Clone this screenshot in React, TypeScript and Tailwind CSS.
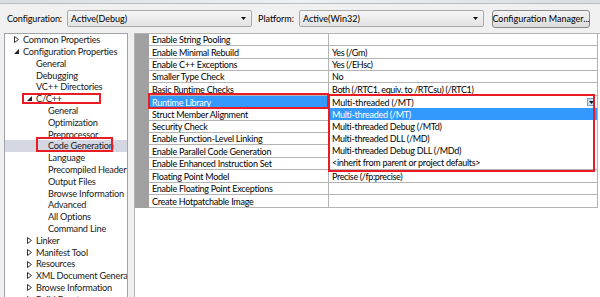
import React from 'react';

const FONT = { fontFamily: 'Lato, "Noto Sans", sans-serif' };

type TreeItem = { label: string; level: 0 | 1 | 2; arrow?: 'open' | 'closed'; selected?: boolean; box?: 'cc' | 'cg' };

const tree: TreeItem[] = [
  { label: 'Common Properties', level: 0, arrow: 'closed' },
  { label: 'Configuration Properties', level: 0, arrow: 'open' },
  { label: 'General', level: 1 },
  { label: 'Debugging', level: 1 },
  { label: 'VC++ Directories', level: 1 },
  { label: 'C/C++', level: 1, arrow: 'open', box: 'cc' },
  { label: 'General', level: 2 },
  { label: 'Optimization', level: 2 },
  { label: 'Preprocessor', level: 2 },
  { label: 'Code Generation', level: 2, selected: true, box: 'cg' },
  { label: 'Language', level: 2 },
  { label: 'Precompiled Headers', level: 2 },
  { label: 'Output Files', level: 2 },
  { label: 'Browse Information', level: 2 },
  { label: 'Advanced', level: 2 },
  { label: 'All Options', level: 2 },
  { label: 'Command Line', level: 2 },
  { label: 'Linker', level: 1, arrow: 'closed' },
  { label: 'Manifest Tool', level: 1, arrow: 'closed' },
  { label: 'Resources', level: 1, arrow: 'closed' },
  { label: 'XML Document Generator', level: 1, arrow: 'closed' },
  { label: 'Browse Information', level: 1, arrow: 'closed' },
  { label: 'Build Events', level: 1, arrow: 'closed' },
];

const levelPad: Record<number, string> = { 0: 'pl-[9px]', 1: 'pl-[22px]', 2: 'pl-[34px]' };

type Row = { name: string; value?: string; h: string; runtime?: boolean };

const rows: Row[] = [
  { name: 'Enable String Pooling', h: 'h-[12px]' },
  { name: 'Enable Minimal Rebuild', value: 'Yes (/Gm)', h: 'h-[13px]' },
  { name: 'Enable C++ Exceptions', value: 'Yes (/EHsc)', h: 'h-[12px]' },
  { name: 'Smaller Type Check', value: 'No', h: 'h-[12px]' },
  { name: 'Basic Runtime Checks', value: 'Both (/RTC1, equiv. to /RTCsu) (/RTC1)', h: 'h-[13px]' },
  { name: 'Runtime Library', h: 'h-[13px]', runtime: true },
  { name: 'Struct Member Alignment', h: 'h-[12px]' },
  { name: 'Security Check', h: 'h-[12px]' },
  { name: 'Enable Function-Level Linking', h: 'h-[12px]' },
  { name: 'Enable Parallel Code Generation', h: 'h-[13px]' },
  { name: 'Enable Enhanced Instruction Set', h: 'h-[12px]' },
  { name: 'Floating Point Model', value: 'Precise (/fp:precise)', h: 'h-[13px]' },
  { name: 'Enable Floating Point Exceptions', h: 'h-[12px]' },
  { name: 'Create Hotpatchable Image', h: 'h-[13px]' },
];

const options = [
  'Multi-threaded (/MT)',
  'Multi-threaded Debug (/MTd)',
  'Multi-threaded DLL (/MD)',
  'Multi-threaded Debug DLL (/MDd)',
  '<inherit from parent or project defaults>',
];

function Arrow({ kind }: { kind?: 'open' | 'closed' }) {
  if (kind === 'closed') {
    return (
      <svg width="5" height="7" viewBox="0 0 5 7" className="block">
        <path d="M0.5 0.5 L4.5 3.5 L0.5 6.5 Z" fill="none" stroke="#333" strokeWidth="1" />
      </svg>
    );
  }
  if (kind === 'open') {
    return (
      <svg width="5" height="5" viewBox="0 0 5 5" className="block">
        <path d="M5 0 L5 5 L0 5 Z" fill="#222" />
      </svg>
    );
  }
  return null;
}

function DownTri() {
  return (
    <svg width="5" height="3" viewBox="0 0 5 3" className="block">
      <path d="M0 0 L5 0 L2.5 3 Z" fill="#111" />
    </svg>
  );
}

function Combo({ text, w }: { text: string; w: string }) {
  return (
    <div className={`${w} h-[17px] rounded-[2px] border border-[#a9a9a9] bg-gradient-to-b from-[#f6f6f6] to-[#e3e3e3] flex items-center pl-[3px] pr-[5px]`}>
      <span className="flex-1 text-[9px] text-black leading-none whitespace-nowrap">{text}</span>
      <DownTri />
    </div>
  );
}

export default function App() {
  return (
    <div className="w-[600px] h-[297px] bg-[#f0f0f0] overflow-hidden flex flex-col text-black" style={FONT}>
      <div className="h-[4px] shrink-0 bg-gradient-to-r from-[#d8dce3] via-[#eef0f3] to-[#d8dce3] border-b border-[#b8bcc4]" />
      <div className="h-[29px] shrink-0 flex items-center pl-[7px]">
        <span className="text-[9px] tracking-[-0.1px] w-[60px] leading-none whitespace-nowrap">Configuration:</span>
        <Combo text="Active(Debug)" w="w-[185px]" />
        <span className="text-[9px] ml-[6px] w-[41px] leading-none whitespace-nowrap">Platform:</span>
        <Combo text="Active(Win32)" w="w-[185px]" />
        <div className="ml-[8px] w-[98px] h-[18px] rounded-[3px] border border-[#8a8a8a] bg-gradient-to-b from-[#f4f4f4] to-[#dcdcdc] flex items-center justify-center text-[9px] leading-none whitespace-nowrap">
          Configuration Manager...
        </div>
      </div>
      <div className="flex-1 flex min-h-0">
        <div className="ml-[4px] w-[124px] border-t border-l border-r border-[#a0a4aa] bg-white overflow-hidden">
          {tree.map((t, i) => (
            <div
              key={i}
              className={`relative h-[11.8px] flex items-center whitespace-nowrap ${levelPad[t.level]} ${t.selected ? 'bg-[#d5d7e2]' : ''}`}
            >
              <span className="w-[9px] shrink-0 flex items-center">
                <Arrow kind={t.arrow} />
              </span>
              <span className="text-[9.2px] tracking-[-0.2px] leading-none text-[#1a1a1a]">{t.label}</span>
              {t.box === 'cc' && (
                <div className="absolute left-[17px] top-[0px] w-[79px] h-[11px] border-2 border-[#e81c24]" />
              )}
              {t.box === 'cg' && (
                <div className="absolute left-[31px] top-[-3px] w-[77px] h-[15px] border-2 border-[#e81c24]" />
              )}
            </div>
          ))}
        </div>
        <div className="ml-[6px] flex-1 border-t border-l border-[#b4b4b4] bg-white">
          {rows.map((r, i) => (
            <div key={i} className={`flex ${r.h}`}>
              <div className="w-[14px] shrink-0 bg-[#a0a0a0]" />
              <div
                className={`relative w-[180px] shrink-0 border-b border-r border-[#b4b4b4] flex items-center pl-[3px] whitespace-nowrap ${r.runtime ? 'bg-[#3399ff] text-white' : ''}`}
              >
                <span className="text-[9px] tracking-[-0.25px] leading-none">{r.name}</span>
                {r.runtime && (
                  <div className="absolute left-[-1px] top-[-3px] w-[181px] h-[16px] border-2 border-[#e81c24]" />
                )}
              </div>
              <div className="relative w-[269px] shrink-0 border-b border-r border-[#b4b4b4] flex items-center pl-[3px] whitespace-nowrap">
                {r.value && <span className="text-[9px] tracking-[-0.35px] leading-none">{r.value}</span>}
                {r.runtime && (
                  <>
                    <span className="flex-1 text-[9px] tracking-[-0.15px] leading-none">Multi-threaded (/MT)</span>
                    <div className="w-[8px] h-[8px] mr-[2px] bg-[#c5e2f7] border border-[#6aa3cf] flex items-center justify-center">
                      <DownTri />
                    </div>
                    <div className="absolute left-0 right-0 top-full bg-white z-10">
                      {options.map((o, j) => (
                        <div
                          key={j}
                          className={`h-[12px] flex items-center pl-[3px] ${j === 0 ? 'bg-[#3399ff] text-white' : 'text-black'}`}
                        >
                          <span className="text-[9px] tracking-[-0.27px] leading-none">{o}</span>
                        </div>
                      ))}
                    </div>
                    <div className="absolute left-[-1px] top-[-2px] w-[267px] h-[78px] border-2 border-[#e81c24] z-20 pointer-events-none" />
                  </>
                )}
              </div>
            </div>
          ))}
        </div>
      </div>
    </div>
  );
}
